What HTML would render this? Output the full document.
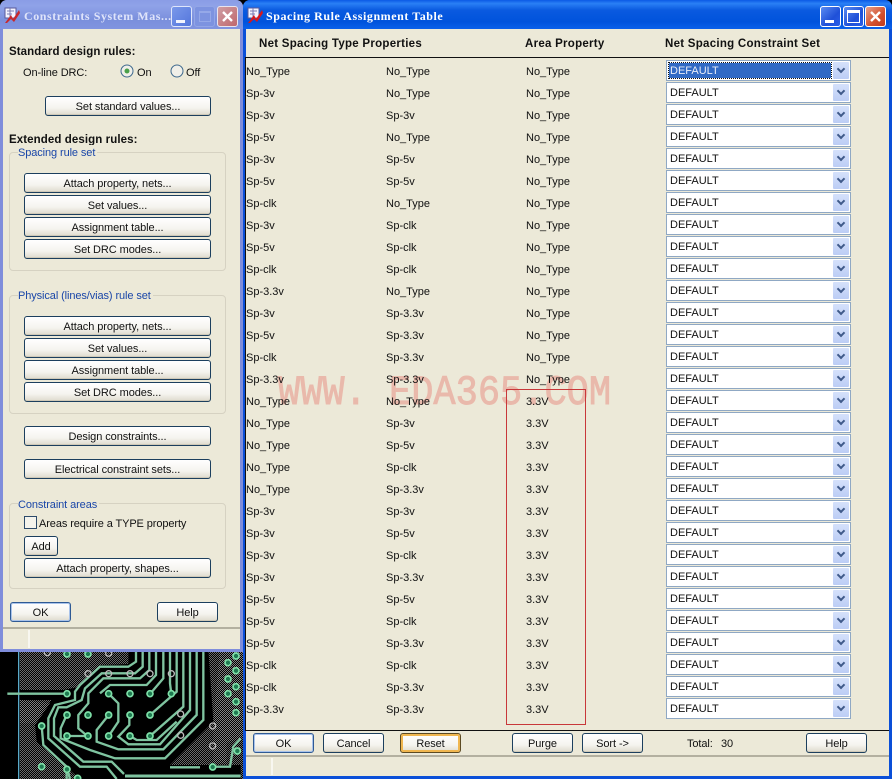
<!DOCTYPE html>
<html><head><meta charset="utf-8"><style>
html,body{margin:0;padding:0}
body{width:892px;height:779px;position:relative;overflow:hidden;background:#000;font:11px/16px "Liberation Sans",sans-serif;color:#111}
div,span,b,u,i,s{position:absolute;display:block;box-sizing:border-box;text-decoration:none;font-style:normal;white-space:nowrap}
.bt{border:1px solid #1c3f5e;border-radius:3px;background:linear-gradient(#fff,#f5f4ef 60%,#dedacd);text-align:center;line-height:20px;font-size:11px;letter-spacing:-.08px;box-shadow:inset 0 -1px 0 #cfc9b8}
.bd{border:1px solid #2f5a94;box-shadow:inset 0 0 0 1px #a9c3ea}
.bo{box-shadow:inset 0 0 0 2px #f0b64f;border-color:#5c4a22}
.h{font:bold 11.5px/16px "Liberation Sans",sans-serif;letter-spacing:.27px}
.h2{font:bold 11.5px/16px "Liberation Sans",sans-serif;letter-spacing:.09px}
.g{border:1px solid #d6d2c2;border-radius:4px}
.l{color:#1a46a8;background:#ece9d8;font-size:11px;letter-spacing:-.1px;padding-right:2px}
.t{font-size:11px;letter-spacing:-.1px}
.r{left:245px;width:640px;height:22px;line-height:24px;font-size:11px}
.r i:nth-child(1){left:1px}.r i:nth-child(2){left:141px}.r i:nth-child(3){left:281px}
.r b{left:421px;top:0;width:185px;height:21px;background:#fff;border:1px solid #8fa8c4;font-weight:normal;padding-left:3px;line-height:21px;font-size:11px}
.r u{right:1px;top:1px;width:16px;height:17px;background:linear-gradient(#d5e1fb,#bccdf5);border-radius:1px}
.r u::after{content:"";position:absolute;left:5px;top:4px;width:4px;height:4px;border-right:2px solid #3f5a8a;border-bottom:2px solid #3f5a8a;transform:rotate(45deg)}
.tb{border-radius:3px;border:1px solid #fff;width:21px;height:21px}
.bl{background:linear-gradient(135deg,#5b8cf0,#1f50d8 60%,#2a5ee8)}
.rd{background:linear-gradient(135deg,#e8a08a,#d2502e 60%,#c03a1c)}
.tt{font:bold 12px/16px "Liberation Serif",serif;letter-spacing:.56px;color:#fff}
</style></head><body>

<svg style="position:absolute;left:0;top:650px" width="244" height="129" viewBox="0 0 732 387">
<defs><pattern id="d" width="6" height="6" patternUnits="userSpaceOnUse"><rect width="2.6" height="2.6" fill="#8e8e8e"/><rect x="3" y="3" width="2.6" height="2.6" fill="#8e8e8e"/></pattern></defs>
<rect width="732" height="387" fill="#000"/>
<rect x="60" width="672" height="387" fill="url(#d)"/>
<polygon points="60,120 190,120 240,110 300,45 385,42 385,0 625,0 640,215 510,345 722,345 722,387 340,387 240,387 110,275 105,225 150,160 60,150" fill="#000"/>
<polygon points="60,110 60,150 155,150 105,220 60,220" fill="url(#d)"/>
<polygon points="660,0 732,0 732,260 680,280 680,340 640,340 640,220" fill="url(#d)"/>
<rect x="54" width="4" height="387" fill="#5aa9c8"/>
<g fill="none" stroke="#7fc4a0" stroke-width="7">
<path d="M22 131H200"/>
<path d="M408 0V35L385 50H300L240 105L225 125V150L165 165L145 205V265L240 350H320L350 387"/>
<path d="M428 0V50L405 70H305L255 115L245 150L200 172H175L162 205V258L250 335H335L372 372"/>
<path d="M448 0V60L420 85H310L265 130V160L235 195V235L262 258"/>
<path d="M468 0V75L440 105H330L300 130"/>
<path d="M490 0V85L450 132"/>
<path d="M510 0V100L514 132"/>
<path d="M530 0V125L450 195"/>
<path d="M550 0V170L450 258"/>
<path d="M570 0V180L480 283H385L355 260L388 225V195"/>
<path d="M590 0V195L490 298H355L290 275V240L326 195"/>
<path d="M610 0V210L495 325H345L270 300L182 265V235L200 195"/>
<path d="M326 131L355 160V215L326 258"/>
<path d="M200 258H235L264 258"/>
<path d="M125 228L130 285L200 350L210 387"/>
<path d="M390 258L410 270H470L530 215"/>
<path d="M640 350H690L700 290L722 265"/>
<path d="M200 355V387"/>
<path d="M510 352H600"/>
<path d="M375 378H722" stroke-width="9"/>
</g>
<g fill="#1d7a50" stroke="#7fe0a8" stroke-width="5">
<circle cx="201" cy="131" r="9"/><circle cx="326" cy="131" r="9"/><circle cx="390" cy="131" r="9"/><circle cx="450" cy="131" r="9"/><circle cx="514" cy="131" r="9"/>
<circle cx="201" cy="195" r="9"/><circle cx="264" cy="195" r="9"/><circle cx="326" cy="195" r="9"/><circle cx="390" cy="195" r="9"/><circle cx="450" cy="195" r="9"/>
<circle cx="125" cy="228" r="9"/><circle cx="201" cy="258" r="9"/><circle cx="264" cy="258" r="9"/><circle cx="326" cy="258" r="9"/><circle cx="390" cy="258" r="9"/><circle cx="450" cy="258" r="9"/>
<circle cx="201" cy="12" r="9"/><circle cx="264" cy="12" r="9"/><circle cx="201" cy="358" r="9"/><circle cx="125" cy="350" r="9"/><circle cx="233" cy="385" r="9"/>
<circle cx="638" cy="351" r="9"/><circle cx="712" cy="303" r="9"/>
<circle cx="708" cy="18" r="9"/><circle cx="684" cy="38" r="9"/><circle cx="708" cy="62" r="9"/><circle cx="684" cy="87" r="9"/><circle cx="708" cy="110" r="9"/><circle cx="684" cy="131" r="9"/><circle cx="708" cy="155" r="9"/><circle cx="708" cy="188" r="9"/>
</g>
<g fill="none" stroke="#bcbcbc" stroke-width="4">
<circle cx="264" cy="71" r="9"/><circle cx="326" cy="71" r="9"/><circle cx="390" cy="71" r="9"/><circle cx="450" cy="71" r="9"/><circle cx="514" cy="71" r="9"/><circle cx="326" cy="10" r="9"/><circle cx="142" cy="8" r="9"/><circle cx="542" cy="192" r="9"/><circle cx="638" cy="228" r="9"/><circle cx="638" cy="288" r="9"/><circle cx="542" cy="256" r="9"/>
</g>
</svg>

<!-- LEFT WINDOW -->
<div style="left:0;top:0;width:243px;height:652px;background:#7f8ddb;border-radius:7px 7px 0 0"></div>
<div style="left:0;top:0;width:243px;height:29px;background:linear-gradient(#8a9ce6,#8fa2e8 20%,#7a8fdc 70%,#8094e0);border-radius:7px 7px 0 0"></div>
<div style="left:3px;top:29px;width:237px;height:620px;background:#ece9d8"></div>
<svg style="position:absolute;left:4px;top:7px" width="17" height="17" viewBox="0 0 17 17"><rect x="1" y="1" width="11" height="10" fill="#f4f4ff" stroke="#5a5a9a"/><path d="M3 4h7M3 7h5M6 1v9" stroke="#7a7ab0"/><path d="M1 16L7 8L9 12L15 3L16 6L10 15L7 12L3 16Z" fill="#c8282c"/></svg>
<div class="tt" style="left:24px;top:8px;color:#dfe4fa">Constraints System Mas...</div>
<div class="tb" style="left:171px;top:6px;background:linear-gradient(135deg,#7a98ea,#5476dc);border-color:#dfe6fb"><s style="left:4px;bottom:3px;width:9px;height:3px;background:#f2f4fd"></s></div>
<div class="tb" style="left:194px;top:6px;background:#7d93e0;border-color:#92a5e6"><s style="left:4px;top:4px;width:12px;height:11px;border:1px solid #95a8e8;border-top-width:2px"></s></div>
<div class="tb" style="left:217px;top:6px;background:linear-gradient(135deg,#cf9ea4,#c0676c);border-color:#e8e4ee"><svg style="position:absolute;left:3px;top:3px" width="13" height="13"><path d="M2 2L11 11M11 2L2 11" stroke="#fff" stroke-width="2.4"/></svg></div>

<div class="h2" style="left:9px;top:44px">Standard design rules:</div>
<div class="t" style="left:23px;top:65px">On-line DRC:</div>
<svg style="position:absolute;left:120px;top:64px" width="75" height="15"><circle cx="7" cy="7" r="6" fill="#f0efe8" stroke="#3f6a8e"/><circle cx="7" cy="7" r="2.5" fill="#4aa04a"/><circle cx="57" cy="7" r="6" fill="#f0efe8" stroke="#3f6a8e"/></svg>
<div class="t" style="left:137px;top:65px">On</div>
<div class="t" style="left:186px;top:65px">Off</div>
<div class="bt" style="left:45px;top:96px;width:166px;height:20px">Set standard values...</div>

<div class="h2" style="left:9px;top:132px">Extended design rules:</div>
<div class="g" style="left:9px;top:152px;width:217px;height:119px"></div>
<div class="l" style="left:18px;top:145px">Spacing rule set</div>
<div class="bt" style="left:24px;top:173px;width:187px;height:20px">Attach property, nets...</div>
<div class="bt" style="left:24px;top:195px;width:187px;height:20px">Set values...</div>
<div class="bt" style="left:24px;top:217px;width:187px;height:20px">Assignment table...</div>
<div class="bt" style="left:24px;top:239px;width:187px;height:20px">Set DRC modes...</div>

<div class="g" style="left:9px;top:295px;width:217px;height:119px"></div>
<div class="l" style="left:18px;top:288px">Physical (lines/vias) rule set</div>
<div class="bt" style="left:24px;top:316px;width:187px;height:20px">Attach property, nets...</div>
<div class="bt" style="left:24px;top:338px;width:187px;height:20px">Set values...</div>
<div class="bt" style="left:24px;top:360px;width:187px;height:20px">Assignment table...</div>
<div class="bt" style="left:24px;top:382px;width:187px;height:20px">Set DRC modes...</div>

<div class="bt" style="left:24px;top:426px;width:187px;height:20px">Design constraints...</div>
<div class="bt" style="left:24px;top:459px;width:187px;height:20px">Electrical constraint sets...</div>

<div class="g" style="left:9px;top:503px;width:217px;height:86px"></div>
<div class="l" style="left:18px;top:497px">Constraint areas</div>
<div style="left:24px;top:516px;width:13px;height:13px;border:1px solid #2c4a6a;background:#f4f3ec"></div>
<div class="t" style="left:39px;top:516px">Areas require a TYPE property</div>
<div class="bt" style="left:24px;top:536px;width:34px;height:20px">Add</div>
<div class="bt" style="left:24px;top:558px;width:187px;height:20px">Attach property, shapes...</div>
<div class="bt bd" style="left:10px;top:602px;width:61px;height:20px">OK</div>
<div class="bt" style="left:157px;top:602px;width:61px;height:20px">Help</div>
<div style="left:3px;top:627px;width:237px;height:2px;background:#b3b0a0"></div>
<div style="left:28px;top:630px;width:2px;height:18px;background:#f8f7f0"></div>

<!-- RIGHT WINDOW -->
<div style="left:243px;top:0;width:649px;height:779px;background:#0a4fd8;border-radius:7px 7px 0 0"></div>
<div style="left:243px;top:0;width:649px;height:29px;background:linear-gradient(#0a5ae6,#2a80f5 12%,#0a5ae0 35%,#0053dc 75%,#0a60ea);border-radius:7px 7px 0 0"></div>
<div style="left:246px;top:29px;width:643px;height:747px;background:#ece9d8"></div>
<svg style="position:absolute;left:247px;top:7px" width="17" height="17" viewBox="0 0 17 17"><rect x="1" y="1" width="11" height="10" fill="#f4f4ff" stroke="#5a5a9a"/><path d="M3 4h7M3 7h5M6 1v9" stroke="#7a7ab0"/><path d="M1 16L7 8L9 12L15 3L16 6L10 15L7 12L3 16Z" fill="#d8181c"/></svg>
<div class="tt" style="left:266px;top:8px">Spacing Rule Assignment Table</div>
<div class="tb bl" style="left:820px;top:6px"><s style="left:4px;bottom:3px;width:9px;height:3px;background:#fff"></s></div>
<div class="tb bl" style="left:843px;top:6px"><s style="left:3px;top:3px;width:13px;height:13px;border:1px solid #fff;border-top-width:3px"></s></div>
<div class="tb rd" style="left:865px;top:6px"><svg style="position:absolute;left:3px;top:3px" width="13" height="13"><path d="M2 2L11 11M11 2L2 11" stroke="#fff" stroke-width="2.4"/></svg></div>

<div class="h" style="left:259px;top:36px">Net Spacing Type Properties</div>
<div class="h" style="left:525px;top:36px">Area Property</div>
<div class="h" style="left:665px;top:36px">Net Spacing Constraint Set</div>
<div style="left:245px;top:57px;width:644px;height:1px;background:#111"></div>
<div style="left:245px;top:57px;width:1px;height:674px;background:#111"></div>
<div style="left:245px;top:730px;width:644px;height:1px;background:#111"></div>

<div style="left:278px;top:372px;font:37px/44px 'Liberation Mono',monospace;-webkit-text-stroke:.8px #e88a80;color:#e88a80;opacity:.5;transform:scaleY(1.12);transform-origin:0 50%;width:340px">WWW. EDA365.COM</div>

<div class="r" style="top:60px"><i>No_Type</i><i>No_Type</i><i>No_Type</i><b style="padding:0"><s style="left:2px;top:2px;width:162px;height:15px;background:#316ac5;outline:1px dotted #111;color:#e8ecf8;line-height:16px;padding-left:1px">DEFAULT</s><u></u></b></div>
<div class="r" style="top:82px"><i>Sp-3v</i><i>No_Type</i><i>No_Type</i><b>DEFAULT<u></u></b></div>
<div class="r" style="top:104px"><i>Sp-3v</i><i>Sp-3v</i><i>No_Type</i><b>DEFAULT<u></u></b></div>
<div class="r" style="top:126px"><i>Sp-5v</i><i>No_Type</i><i>No_Type</i><b>DEFAULT<u></u></b></div>
<div class="r" style="top:148px"><i>Sp-3v</i><i>Sp-5v</i><i>No_Type</i><b>DEFAULT<u></u></b></div>
<div class="r" style="top:170px"><i>Sp-5v</i><i>Sp-5v</i><i>No_Type</i><b>DEFAULT<u></u></b></div>
<div class="r" style="top:192px"><i>Sp-clk</i><i>No_Type</i><i>No_Type</i><b>DEFAULT<u></u></b></div>
<div class="r" style="top:214px"><i>Sp-3v</i><i>Sp-clk</i><i>No_Type</i><b>DEFAULT<u></u></b></div>
<div class="r" style="top:236px"><i>Sp-5v</i><i>Sp-clk</i><i>No_Type</i><b>DEFAULT<u></u></b></div>
<div class="r" style="top:258px"><i>Sp-clk</i><i>Sp-clk</i><i>No_Type</i><b>DEFAULT<u></u></b></div>
<div class="r" style="top:280px"><i>Sp-3.3v</i><i>No_Type</i><i>No_Type</i><b>DEFAULT<u></u></b></div>
<div class="r" style="top:302px"><i>Sp-3v</i><i>Sp-3.3v</i><i>No_Type</i><b>DEFAULT<u></u></b></div>
<div class="r" style="top:324px"><i>Sp-5v</i><i>Sp-3.3v</i><i>No_Type</i><b>DEFAULT<u></u></b></div>
<div class="r" style="top:346px"><i>Sp-clk</i><i>Sp-3.3v</i><i>No_Type</i><b>DEFAULT<u></u></b></div>
<div class="r" style="top:368px"><i>Sp-3.3v</i><i>Sp-3.3v</i><i>No_Type</i><b>DEFAULT<u></u></b></div>
<div class="r" style="top:390px"><i>No_Type</i><i>No_Type</i><i>3.3V</i><b>DEFAULT<u></u></b></div>
<div class="r" style="top:412px"><i>No_Type</i><i>Sp-3v</i><i>3.3V</i><b>DEFAULT<u></u></b></div>
<div class="r" style="top:434px"><i>No_Type</i><i>Sp-5v</i><i>3.3V</i><b>DEFAULT<u></u></b></div>
<div class="r" style="top:456px"><i>No_Type</i><i>Sp-clk</i><i>3.3V</i><b>DEFAULT<u></u></b></div>
<div class="r" style="top:478px"><i>No_Type</i><i>Sp-3.3v</i><i>3.3V</i><b>DEFAULT<u></u></b></div>
<div class="r" style="top:500px"><i>Sp-3v</i><i>Sp-3v</i><i>3.3V</i><b>DEFAULT<u></u></b></div>
<div class="r" style="top:522px"><i>Sp-3v</i><i>Sp-5v</i><i>3.3V</i><b>DEFAULT<u></u></b></div>
<div class="r" style="top:544px"><i>Sp-3v</i><i>Sp-clk</i><i>3.3V</i><b>DEFAULT<u></u></b></div>
<div class="r" style="top:566px"><i>Sp-3v</i><i>Sp-3.3v</i><i>3.3V</i><b>DEFAULT<u></u></b></div>
<div class="r" style="top:588px"><i>Sp-5v</i><i>Sp-5v</i><i>3.3V</i><b>DEFAULT<u></u></b></div>
<div class="r" style="top:610px"><i>Sp-5v</i><i>Sp-clk</i><i>3.3V</i><b>DEFAULT<u></u></b></div>
<div class="r" style="top:632px"><i>Sp-5v</i><i>Sp-3.3v</i><i>3.3V</i><b>DEFAULT<u></u></b></div>
<div class="r" style="top:654px"><i>Sp-clk</i><i>Sp-clk</i><i>3.3V</i><b>DEFAULT<u></u></b></div>
<div class="r" style="top:676px"><i>Sp-clk</i><i>Sp-3.3v</i><i>3.3V</i><b>DEFAULT<u></u></b></div>
<div class="r" style="top:698px"><i>Sp-3.3v</i><i>Sp-3.3v</i><i>3.3V</i><b>DEFAULT<u></u></b></div>

<div style="left:506px;top:389px;width:80px;height:336px;border:1px solid #c8383a"></div>

<div class="bt bd" style="left:253px;top:733px;width:61px;height:20px">OK</div>
<div class="bt" style="left:323px;top:733px;width:61px;height:20px">Cancel</div>
<div class="bt bo" style="left:400px;top:733px;width:61px;height:20px">Reset</div>
<div class="bt" style="left:512px;top:733px;width:61px;height:20px">Purge</div>
<div class="bt" style="left:582px;top:733px;width:61px;height:20px">Sort -&gt;</div>
<div class="t" style="left:687px;top:736px">Total:</div>
<div class="t" style="left:721px;top:736px">30</div>
<div class="bt" style="left:806px;top:733px;width:61px;height:20px">Help</div>
<div style="left:246px;top:755px;width:643px;height:2px;background:#b3b0a0"></div>
<div style="left:271px;top:758px;width:2px;height:17px;background:#f8f7f0"></div>
</body></html>
